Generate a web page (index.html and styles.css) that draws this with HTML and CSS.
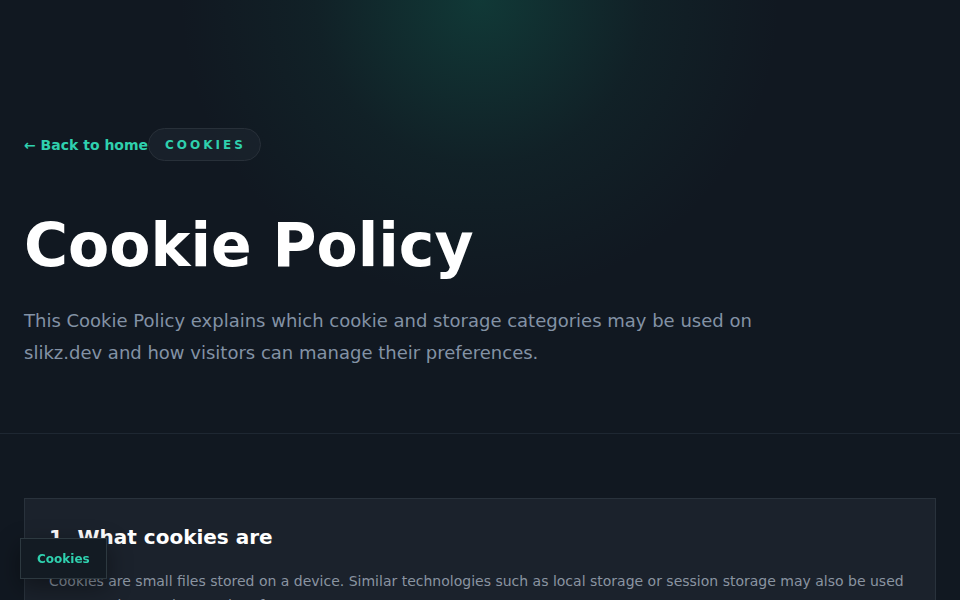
FILE: index.html
```html
<!DOCTYPE html>
<html lang="en">
<head>
<meta charset="utf-8">
<title>Cookie Policy</title>
<link rel="stylesheet" href="styles.css">
</head>
<body>
<div class="glow"></div>
<header class="hero">
  <div class="crumbs">
    <a class="back" href="#">← Back to home</a>
    <span class="pill">COOKIES</span>
  </div>
  <h1 class="title">Cookie Policy</h1>
  <p class="lead">This Cookie Policy explains which cookie and storage categories may be used on slikz.dev and how visitors can manage their preferences.</p>
</header>
<main class="content">
  <section class="card">
    <h2 class="card-title">1. What cookies are</h2>
    <p class="card-text">Cookies are small files stored on a device. Similar technologies such as local storage or session storage may also be used to remember settings and preferences.</p>
  </section>
</main>
<button class="cookie-btn">Cookies</button>
</body>
</html>
```

FILE: styles.css
```css
html, body {
  margin: 0;
  padding: 0;
}
body {
  background: #111821;
  color: #fff;
  font-family: "DejaVu Sans", "Noto Sans", sans-serif;
  min-height: 600px;
  position: relative;
  overflow: hidden;
}
.glow {
  position: absolute;
  left: 0;
  top: 0;
  width: 960px;
  height: 440px;
  background: radial-gradient(ellipse 300px 300px at 480px 0px, rgba(16, 110, 90, 0.38), rgba(16, 110, 90, 0.1) 55%, rgba(16, 110, 90, 0) 100%);
  pointer-events: none;
}
.hero {
  position: relative;
  padding: 128px 24px 64px;
  border-bottom: 1px solid #1e2732;
}
.crumbs {
  display: flex;
  align-items: center;
}
.back {
  color: #2fd0ae;
  font-weight: 700;
  font-size: 14px;
  text-decoration: none;
}
.pill {
  display: inline-flex;
  align-items: center;
  height: 31px;
  padding: 0 14px 0 16px;
  border: 1px solid #283039;
  border-radius: 999px;
  background: rgba(30, 38, 48, 0.6);
  color: #2fd0ae;
  font-weight: 700;
  font-size: 12px;
  letter-spacing: 0.25em;
}
.title {
  margin: 51px 0 0;
  font-size: 60px;
  line-height: 66px;
  font-weight: 700;
  color: #fff;
}
.lead {
  margin: 27px 0 0;
  max-width: 770px;
  font-size: 18px;
  line-height: 32px;
  color: #8392a5;
}
.content {
  padding: 64px 24px 40px;
}
.card {
  border: 1px solid #29323c;
  background: #1b222c;
  padding: 24px 24px;
}
.card-title {
  margin: 0;
  font-size: 20px;
  line-height: 28px;
  font-weight: 700;
  color: #fff;
}
.card-text {
  margin: 18px 0 0;
  font-size: 14px;
  line-height: 24px;
  color: #8a94a1;
}
.cookie-btn {
  position: fixed;
  left: 20px;
  bottom: 21px;
  height: 41px;
  padding: 0 16px;
  background: #131b23;
  border: 1px solid #2d3940;
  color: #2fd0ae;
  font-family: "DejaVu Sans", sans-serif;
  font-weight: 700;
  font-size: 12px;
  box-shadow: 0 8px 24px rgba(0,0,0,0.4);
}
```
